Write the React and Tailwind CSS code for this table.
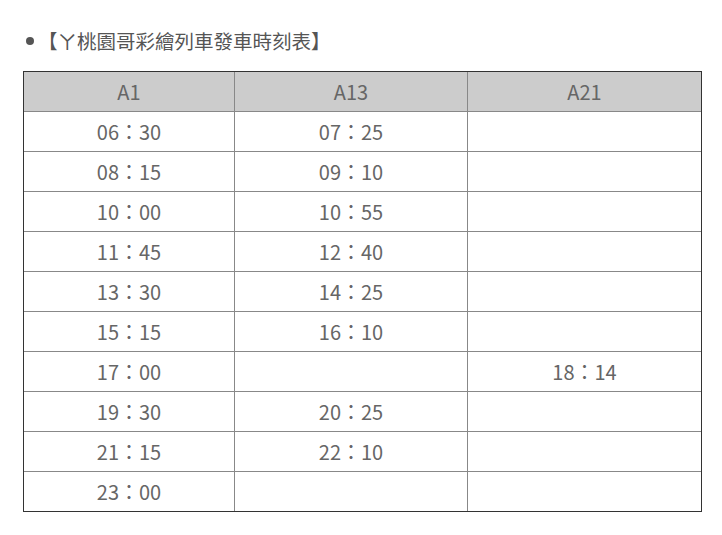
import React from "react";

const rows = [
  ["06：30", "07：25", ""],
  ["08：15", "09：10", ""],
  ["10：00", "10：55", ""],
  ["11：45", "12：40", ""],
  ["13：30", "14：25", ""],
  ["15：15", "16：10", ""],
  ["17：00", "", "18：14"],
  ["19：30", "20：25", ""],
  ["21：15", "22：10", ""],
  ["23：00", "", ""],
];

export default function App() {
  const font = { fontFamily: '"Noto Sans CJK TC", "Noto Sans", sans-serif' };
  return (
    <div className="w-[722px] h-[535px] bg-white pt-[27px] pl-[23px]" style={font}>
      <div className="flex items-center h-[28px] pl-[3px]">
        <span className="w-[8px] h-[8px] rounded-full bg-[#555] mr-[4px]" />
        <span className="text-[19.5px] text-[#555] leading-none">【ㄚ桃園哥彩繪列車發車時刻表】</span>
      </div>
      <div className="mt-[16px] w-[679px] border border-[#333]">
        <div className="grid grid-cols-[211px_233px_233px] text-[20px] text-[#666]">
          {["A1", "A13", "A21"].map((h, i) => (
            <div
              key={h}
              className={`h-[40px] pt-[1px] bg-[#cccccc] border-b border-[#888] flex items-center justify-center ${i < 2 ? "border-r" : ""}`}
            >
              {h}
            </div>
          ))}
          {rows.map((r, ri) =>
            r.map((c, ci) => (
              <div
                key={ri + "-" + ci}
                className={`${ri < rows.length - 1 ? "h-[40px] border-b" : "h-[39px]"} pt-[1px] ${ci < 2 ? "border-r" : ""} border-[#888] flex items-center justify-center`}
              >
                {c}
              </div>
            ))
          )}
        </div>
      </div>
    </div>
  );
}
